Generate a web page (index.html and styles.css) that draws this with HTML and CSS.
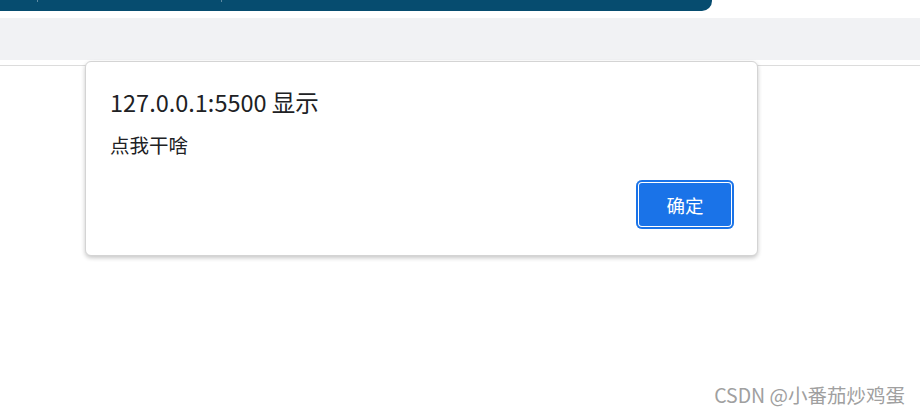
FILE: index.html
```html
<!DOCTYPE html>
<html>
<head>
    <title>alert</title>
    <link rel="stylesheet" href="styles.css">
</head>
<body>
    <div class="topbar">
        <span class="sep sep-a"></span>
        <span class="sep sep-b"></span>
    </div>
    <div class="band"></div>
    <div class="rule"></div>

    <div class="dialog">
        <div class="dialog-title">127.0.0.1:5500 显示</div>
        <div class="dialog-msg">点我干啥</div>
        <div class="dialog-actions">
            <button class="ok-btn">确定</button>
        </div>
    </div>

    <div class="watermark">CSDN @小番茄炒鸡蛋</div>
</body>
</html>
```

FILE: styles.css
```css
body { margin: 0; background: #fff; font-family: "Noto Sans CJK SC", "Noto Sans", sans-serif; height: 415px; overflow: hidden; position: relative; }
.topbar { width: 712px; height: 11px; background: #064c6f; border-bottom-right-radius: 10px; position: relative; }
.sep { position: absolute; top: 0; width: 1px; height: 2px; background: #5d8aa2; }
.sep-a { left: 37px; }
.sep-b { left: 221px; }
.band { margin-top: 7px; height: 42px; background: #f1f2f4; }
.rule { margin-top: 5px; height: 1px; background: #dcdcdc; }

.dialog { position: absolute; left: 85px; top: 61px; width: 624px; height: 193px; background: #fff; border: 1px solid #d4d4d4; border-radius: 6px; box-shadow: 0 2px 4px rgba(0,0,0,0.22); display: flex; flex-direction: column; padding: 0 23px 0 24px; }
.dialog-title { margin-top: 24px; font-size: 23.5px; line-height: 32px; color: #202124; }
.dialog-msg { margin-top: 14px; font-size: 19.5px; line-height: 26px; color: #202124; }
.dialog-actions { display: flex; justify-content: flex-end; margin-top: 22px; }
.ok-btn { width: 98px; height: 49px; border: none; border-radius: 6px; background: #1a73e8; color: #fff; font-family: inherit; font-size: 18.5px; box-shadow: inset 0 0 0 2px #1a73e8, inset 0 0 0 3px #fff; padding: 0; }

.watermark { position: absolute; right: 15px; top: 382px; font-size: 19.5px; line-height: 26px; color: #a0a0a0; }
```
